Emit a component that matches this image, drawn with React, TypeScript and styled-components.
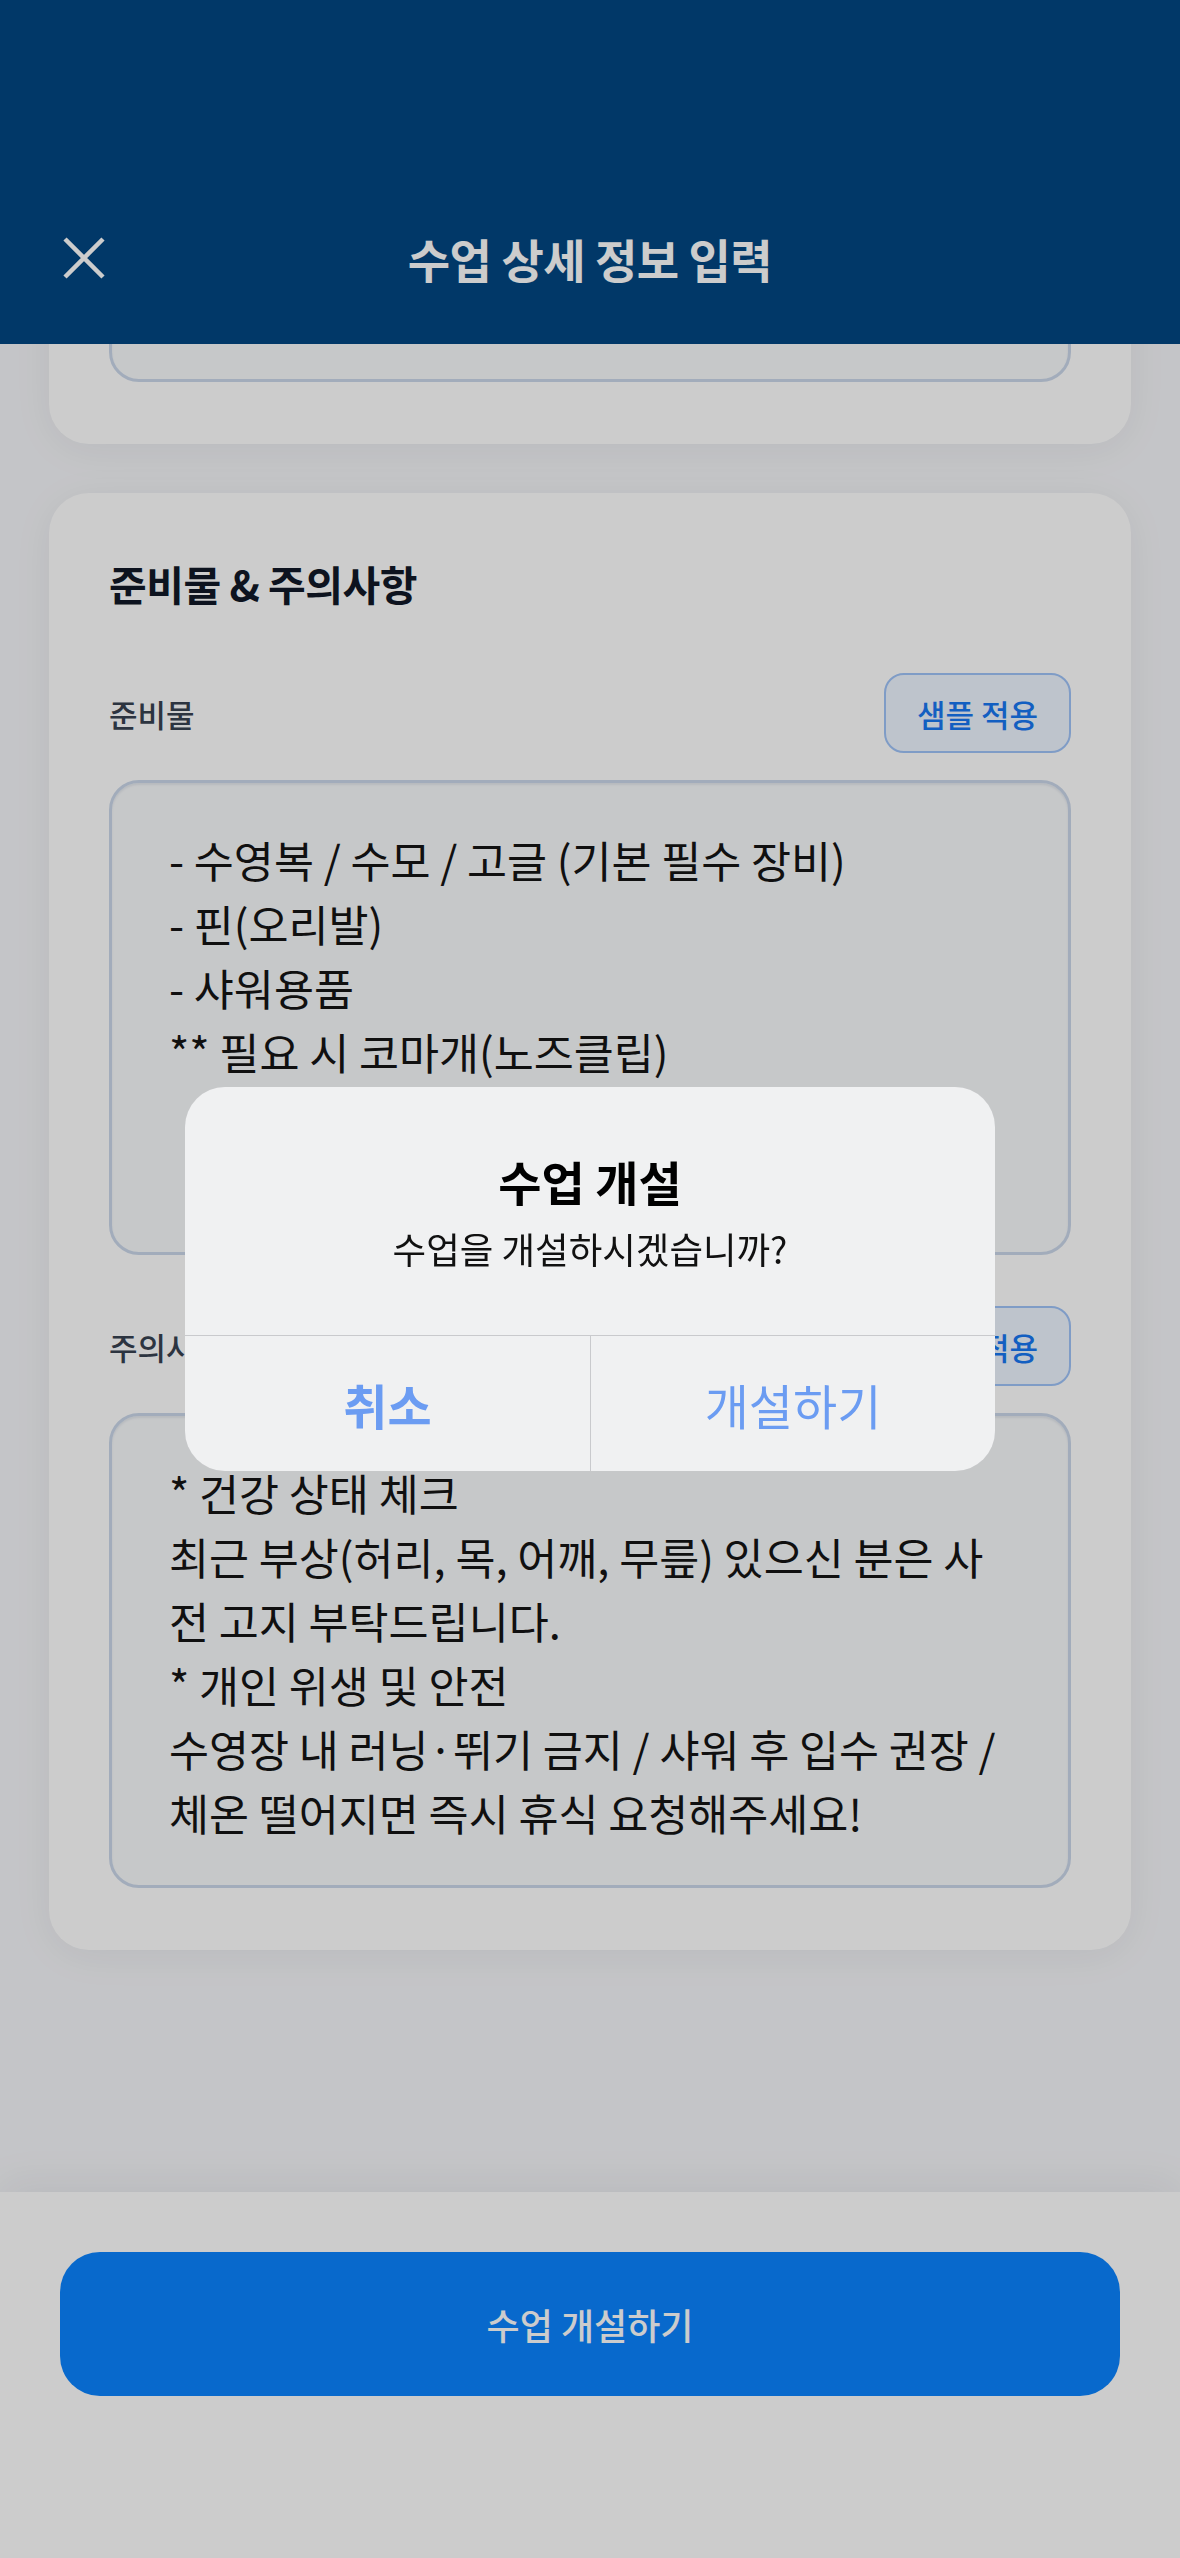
import React from "react";
import styled, { createGlobalStyle } from "styled-components";

const GlobalStyle = createGlobalStyle`
  * { box-sizing: border-box; }
  html, body { margin: 0; padding: 0; }
  body {
    background: #f6f7fa;
    font-family: "Noto Sans CJK KR", "Noto Sans", sans-serif;
    -webkit-font-smoothing: antialiased;
  }
`;

const Screen = styled.div`
  position: relative;
  width: 1180px;
  min-height: 2558px;
  background: #f6f7fa;
  overflow: hidden;
`;

const Header = styled.header`
  position: fixed;
  top: 0;
  left: 0;
  right: 0;
  height: 344px;
  padding-top: 172px;
  background: #024682;
  z-index: 10;
`;

const NavRow = styled.div`
  height: 172px;
  display: grid;
  grid-template-columns: 1fr auto 1fr;
  align-items: center;
  padding: 0 62px;
`;

const CloseButton = styled.button`
  justify-self: start;
  width: 44px;
  height: 44px;
  padding: 0;
  border: 0;
  background: none;
  display: flex;
`;

const HeaderTitle = styled.h1`
  margin: 0;
  font-size: 46px;
  font-weight: 700;
  color: #fff;
  letter-spacing: -0.5px;
`;

const Main = styled.main`
  display: flex;
  flex-direction: column;
  gap: 49px;
  padding: 42px 49px 420px;
`;

const Card = styled.section`
  background: #fff;
  border-radius: 40px;
  padding: 60px 60px 62px;
  box-shadow: 0 6px 40px rgba(15, 23, 42, 0.06);
`;

const CardTitle = styled.h2`
  margin: 0 0 60px;
  font-size: 41px;
  line-height: 60px;
  font-weight: 700;
  color: #111827;
  letter-spacing: -0.5px;
`;

const Field = styled.div`
  & + & {
    margin-top: 51px;
  }
`;

const FieldHead = styled.div`
  display: flex;
  align-items: center;
  justify-content: space-between;
  height: 80px;
  margin-bottom: 27px;
`;

const Label = styled.label`
  font-size: 31px;
  font-weight: 500;
  color: #374151;
`;

const SampleButton = styled.button`
  width: 187px;
  height: 80px;
  border-radius: 20px;
  border: 2.5px solid #9fc3f8;
  background: #eef5ff;
  color: #1877f2;
  font-family: inherit;
  font-size: 31px;
  font-weight: 500;
`;

const TextArea = styled.textarea<{ $h: number }>`
  display: block;
  width: 100%;
  height: ${(p) => p.$h}px;
  padding: 45px 70px 45px 57px;
  border: 3px solid #cbd8ea;
  border-radius: 30px;
  background: #f8fafc;
  box-shadow: inset 0 2px 2px rgba(100, 116, 139, 0.12);
  font-family: inherit;
  font-size: 43.5px;
  line-height: 64px;
  color: #141414;
  resize: none;
  overflow: hidden;
  outline: none;
`;

const BottomBar = styled.footer`
  position: fixed;
  left: 0;
  right: 0;
  bottom: 0;
  height: 366px;
  padding: 60px 60px 0;
  background: #fff;
  box-shadow: 0 -10px 40px rgba(15, 23, 42, 0.06);
  z-index: 10;
`;

const PrimaryButton = styled.button`
  width: 100%;
  height: 144px;
  border: 0;
  border-radius: 40px;
  background: #0a84ff;
  color: #fff;
  font-family: inherit;
  font-size: 36px;
  font-weight: 500;
`;

const Backdrop = styled.div`
  position: fixed;
  inset: 0;
  background: rgba(0, 0, 0, 0.2);
  z-index: 100;
  display: flex;
  align-items: center;
  justify-content: center;
`;

const Alert = styled.div`
  width: 810px;
  border-radius: 40px;
  background: #f0f1f2;
  overflow: hidden;
  text-align: center;
`;

const AlertBody = styled.div`
  padding: 64px 40px 62px;
`;

const AlertTitle = styled.div`
  font-size: 47px;
  line-height: 60px;
  font-weight: 700;
  color: #000;
`;

const AlertMessage = styled.div`
  margin-top: 14px;
  font-size: 36.5px;
  line-height: 48px;
  color: #111;
`;

const AlertActions = styled.div`
  display: grid;
  grid-template-columns: 1fr 1fr;
  border-top: 1.5px solid #c9cacd;
`;

const AlertAction = styled.button<{ $bold?: boolean }>`
  height: 135px;
  border: 0;
  background: none;
  font-family: inherit;
  font-size: 48px;
  font-weight: ${(p) => (p.$bold ? 700 : 400)};
  color: #6b9cf2;
  & + & {
    border-left: 1.5px solid #c9cacd;
  }
`;

const supplies = `- 수영복 / 수모 / 고글 (기본 필수 장비)
- 핀(오리발)
- 샤워용품
** 필요 시 코마개(노즈클립)`;

const cautions = `* 건강 상태 체크
최근 부상(허리, 목, 어깨, 무릎) 있으신 분은 사전 고지 부탁드립니다.
* 개인 위생 및 안전
수영장 내 러닝·뛰기 금지 / 샤워 후 입수 권장 / 체온 떨어지면 즉시 휴식 요청해주세요!`;

export default function App() {
  return (
    <>
      <GlobalStyle />
      <Screen>
        <Header>
          <NavRow>
            <CloseButton aria-label="닫기">
              <svg width="44" height="44" viewBox="0 0 44 44">
                <path d="M3 3 L41 41 M41 3 L3 41" stroke="#fff" strokeWidth="4.5" fill="none" />
              </svg>
            </CloseButton>
            <HeaderTitle>수업 상세 정보 입력</HeaderTitle>
            <span />
          </NavRow>
        </Header>

        <Main>
          <Card>
            <TextArea $h={280} readOnly defaultValue="" />
          </Card>

          <Card>
            <CardTitle>준비물 &amp; 주의사항</CardTitle>
            <Field>
              <FieldHead>
                <Label>준비물</Label>
                <SampleButton>샘플 적용</SampleButton>
              </FieldHead>
              <TextArea $h={475} readOnly defaultValue={supplies} />
            </Field>
            <Field>
              <FieldHead>
                <Label>주의사항</Label>
                <SampleButton>샘플 적용</SampleButton>
              </FieldHead>
              <TextArea $h={475} readOnly defaultValue={cautions} />
            </Field>
          </Card>
        </Main>

        <BottomBar>
          <PrimaryButton>수업 개설하기</PrimaryButton>
        </BottomBar>

        <Backdrop>
          <Alert role="alertdialog">
            <AlertBody>
              <AlertTitle>수업 개설</AlertTitle>
              <AlertMessage>수업을 개설하시겠습니까?</AlertMessage>
            </AlertBody>
            <AlertActions>
              <AlertAction $bold>취소</AlertAction>
              <AlertAction>개설하기</AlertAction>
            </AlertActions>
          </Alert>
        </Backdrop>
      </Screen>
    </>
  );
}
